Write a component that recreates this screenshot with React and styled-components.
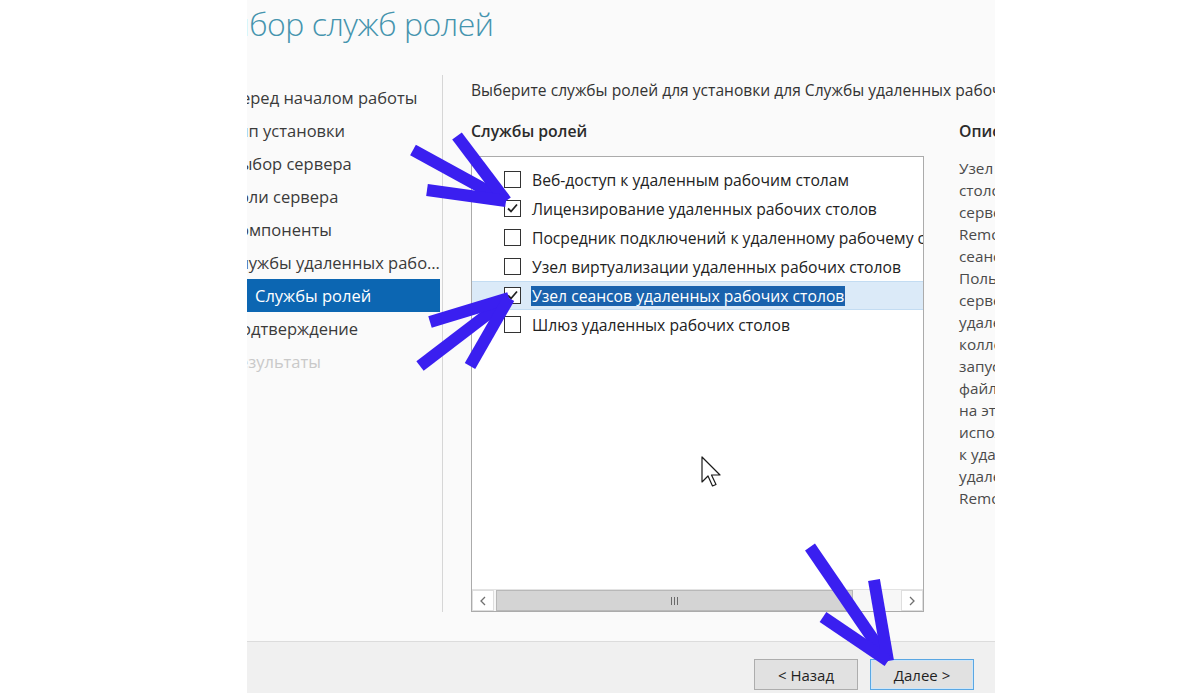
import React from 'react';
import styled, { createGlobalStyle } from 'styled-components';

const GlobalStyle = createGlobalStyle`
  html, body {
    margin: 0;
    padding: 0;
    background: #ffffff;
  }
  body {
    font-family: "Open Sans", "Noto Sans", "Liberation Sans", sans-serif;
  }
`;

const Page = styled.div`
  position: relative;
  display: flex;
  width: 1200px;
  height: 693px;
  overflow: hidden;
  background: #ffffff;
`;

const Gutter = styled.div`
  width: ${p => p.$w}px;
  flex-shrink: 0;
`;

const Viewport = styled.div`
  width: 748px;
  height: 693px;
  flex-shrink: 0;
  overflow: hidden;
  background: #fafafa;
`;

const Window = styled.div`
  margin-left: -40px;
  width: 788px;
  height: 100%;
  display: flex;
  flex-direction: column;
  overflow: hidden;
`;

const Header = styled.div`
  height: 75px;
  flex-shrink: 0;
`;

const Title = styled.h1`
  margin: 0;
  padding-top: 2px;
  font-size: 32px;
  line-height: 44px;
  font-weight: 300;
  letter-spacing: -0.5px;
  color: #4594ae;
  white-space: nowrap;
`;

const Body = styled.div`
  height: 537px;
  flex-shrink: 0;
  display: flex;
  margin-bottom: 29px;
`;

const Nav = styled.div`
  width: 236px;
  flex-shrink: 0;
  padding-top: 6px;
  border-right: 1px solid #d6d6d6;
  box-sizing: border-box;
`;

const NavItem = styled.div`
  height: 33px;
  margin-right: 2px;
  padding-left: ${p => (p.$sub ? 48 : 22)}px;
  display: flex;
  align-items: center;
  font-size: 16.5px;
  color: ${p => (p.$active ? '#ffffff' : p.$disabled ? '#c9c9c9' : '#3a3a3a')};
  background: ${p => (p.$active ? '#0c66b2' : 'transparent')};
  box-sizing: border-box;
`;

const NavText = styled.span`
  display: block;
  min-width: 0;
  white-space: nowrap;
  overflow: hidden;
  text-overflow: ellipsis;
`;

const Content = styled.div`
  flex: 1;
  min-width: 0;
  padding: 5px 0 0 28px;
  display: flex;
  flex-direction: column;
`;

const Instruction = styled.div`
  font-size: 15.6px;
  line-height: 20px;
  color: #333333;
  white-space: nowrap;
`;

const Columns = styled.div`
  flex: 1;
  display: flex;
  gap: 34px;
  margin-top: 21px;
  min-height: 0;
`;

const RolesColumn = styled.div`
  width: 453px;
  flex-shrink: 0;
  display: flex;
  flex-direction: column;
`;

const DescColumn = styled.div`
  width: 240px;
  flex-shrink: 0;
  padding-left: 1px;
`;

const Heading = styled.div`
  font-size: 15.8px;
  line-height: 20px;
  font-weight: 600;
  color: #2b2b2b;
  white-space: nowrap;
`;

const ListBox = styled.div`
  flex: 1;
  margin-top: 15px;
  background: #ffffff;
  border: 1px solid #ababab;
  display: flex;
  flex-direction: column;
  padding-top: 8px;
  overflow: hidden;
`;

const Rows = styled.div`
  flex: 1;
`;

const Row = styled.div`
  height: 29px;
  display: flex;
  align-items: center;
  padding-left: 32px;
  gap: 10px;
  box-sizing: border-box;
  overflow: hidden;
  background: ${p => (p.$selected ? '#dbeaf8' : 'transparent')};
  border-top: 1px solid ${p => (p.$selected ? '#c3dcf2' : 'transparent')};
  border-bottom: 1px solid ${p => (p.$selected ? '#c3dcf2' : 'transparent')};
`;

const Box = styled.span`
  width: 15px;
  height: 15px;
  flex-shrink: 0;
  border: 1px solid #333333;
  background: #ffffff;
  display: flex;
  align-items: center;
  justify-content: center;
`;

const RowLabel = styled.span`
  font-size: 15.7px;
  line-height: 20px;
  padding: 0 1px;
  color: ${p => (p.$selected ? '#ffffff' : '#222222')};
  background: ${p => (p.$selected ? '#1a62ad' : 'transparent')};
  white-space: nowrap;
`;

const ScrollBar = styled.div`
  height: 21px;
  display: flex;
  border-top: 1px solid #e3e3e3;
  background: #f7f7f7;
`;

const ScrollButton = styled.div`
  width: 22px;
  flex-shrink: 0;
  display: flex;
  align-items: center;
  justify-content: center;
  background: #ffffff;
  border: 1px solid #dedede;
  box-sizing: border-box;
`;

const Track = styled.div`
  flex: 1;
  display: flex;
  padding: 0 2px;
`;

const Thumb = styled.div`
  width: 357px;
  flex-shrink: 0;
  background: #d4d4d4;
  border: 1px solid #b8b8b8;
  box-sizing: border-box;
  display: flex;
  align-items: center;
  justify-content: center;
  gap: 2px;
`;

const GripLine = styled.span`
  width: 1px;
  height: 8px;
  background: #6a6a6a;
`;

const DescText = styled.div`
  margin-top: 16px;
  font-size: 15.3px;
  line-height: 22px;
  color: #4a4a4a;
  white-space: nowrap;
`;

const Footer = styled.div`
  flex: 1;
  border-top: 1px solid #dcdcdc;
  background: #f0f0f0;
  display: flex;
  justify-content: flex-end;
  align-items: flex-start;
  gap: 12px;
  padding: 17px 21px 0 0;
`;

const Button = styled.button`
  width: 104px;
  height: 31px;
  font-family: inherit;
  font-size: 15px;
  color: #1f1f1f;
  background: #e1e1e1;
  border: 1px solid ${p => (p.$focused ? '#5aa7e3' : '#adadad')};
  box-shadow: ${p => (p.$focused ? 'inset 0 0 0 1px #cfe6f8' : 'none')};
  padding: 0;
`;

const Overlay = styled.svg`
  position: absolute;
  left: 0;
  top: 0;
  pointer-events: none;
`;

const navItems = [
  { text: 'Перед началом работы' },
  { text: 'Тип установки' },
  { text: 'Выбор сервера' },
  { text: 'Роли сервера' },
  { text: 'Компоненты' },
  { text: 'Службы удаленных рабочих столов' },
  { text: 'Службы ролей', active: true, sub: true },
  { text: 'Подтверждение' },
  { text: 'Результаты', disabled: true },
];

const roles = [
  { text: 'Веб-доступ к удаленным рабочим столам' },
  { text: 'Лицензирование удаленных рабочих столов', checked: true },
  { text: 'Посредник подключений к удаленному рабочему столу' },
  { text: 'Узел виртуализации удаленных рабочих столов' },
  { text: 'Узел сеансов удаленных рабочих столов', checked: true, selected: true },
  { text: 'Шлюз удаленных рабочих столов' },
];

const description = [
  'Узел сеансов удаленных рабочих',
  'столов позволяет',
  'серверу размещать',
  'RemoteApp-программы или',
  'сеансовые рабочие столы.',
  'Пользователи могут подключаться к',
  'серверам узлов сеансов',
  'удаленных рабочих столов в',
  'коллекции сеансов для',
  'запуска программ, сохранения',
  'файлов и использования ресурсов',
  'на этих серверах. Доступ',
  'используется для подключения',
  'к удаленным рабочим столам',
  'удаленных рабочих столов или',
  'RemoteApp-программ.',
];

const arrows = [
  [[413, 150], [457, 136], [427, 190], [506, 201]],
  [[420, 366], [430, 322], [470, 366], [509, 298]],
  [[810, 547], [874, 580], [823, 617], [888, 661]],
];

function Check() {
  return (
    <svg width="13" height="13" viewBox="0 0 13 13">
      <polyline points="2,6.5 5,9.5 11,2.5" fill="none" stroke="#222" strokeWidth="1.8" />
    </svg>
  );
}

function Chevron({ dir }) {
  const pts = dir === 'left' ? '6,1 2,5 6,9' : '2,1 6,5 2,9';
  return (
    <svg width="8" height="10" viewBox="0 0 8 10">
      <polyline points={pts} fill="none" stroke="#707070" strokeWidth="1.3" />
    </svg>
  );
}

export default function App() {
  return (
    <>
      <GlobalStyle />
      <Page>
        <Gutter $w={247} />
        <Viewport>
          <Window>
            <Header>
              <Title>Выбор служб ролей</Title>
            </Header>
            <Body>
              <Nav>
                {navItems.map(item => (
                  <NavItem key={item.text} $active={item.active} $sub={item.sub} $disabled={item.disabled}>
                    <NavText>{item.text}</NavText>
                  </NavItem>
                ))}
              </Nav>
              <Content>
                <Instruction>
                  Выберите службы ролей для установки для Службы удаленных рабочих столов
                </Instruction>
                <Columns>
                  <RolesColumn>
                    <Heading>Службы ролей</Heading>
                    <ListBox>
                      <Rows>
                        {roles.map(r => (
                          <Row key={r.text} $selected={r.selected}>
                            <Box>{r.checked && <Check />}</Box>
                            <RowLabel $selected={r.selected}>{r.text}</RowLabel>
                          </Row>
                        ))}
                      </Rows>
                      <ScrollBar>
                        <ScrollButton><Chevron dir="left" /></ScrollButton>
                        <Track>
                          <Thumb>
                            <GripLine />
                            <GripLine />
                            <GripLine />
                          </Thumb>
                        </Track>
                        <ScrollButton><Chevron dir="right" /></ScrollButton>
                      </ScrollBar>
                    </ListBox>
                  </RolesColumn>
                  <DescColumn>
                    <Heading>Описание</Heading>
                    <DescText>
                      {description.map(line => (
                        <div key={line}>{line}</div>
                      ))}
                    </DescText>
                  </DescColumn>
                </Columns>
              </Content>
            </Body>
            <Footer>
              <Button>&lt; Назад</Button>
              <Button $focused>Далее &gt;</Button>
            </Footer>
          </Window>
        </Viewport>
        <Overlay width="1200" height="693" viewBox="0 0 1200 693">
          {arrows.map((a, i) => (
            <g key={i} stroke="#3a1ff0" strokeWidth="12" strokeLinecap="butt">
              {a.slice(0, 3).map(([x, y], j) => (
                <line key={j} x1={x} y1={y} x2={a[3][0]} y2={a[3][1]} />
              ))}
            </g>
          ))}
          <path
            d="M702 457 L702 482 L708 476 L712.5 486 L716 484.5 L711.5 475 L720 475 Z"
            fill="#ffffff"
            stroke="#1a1a1a"
            strokeWidth="1.2"
            strokeLinejoin="round"
          />
        </Overlay>
      </Page>
    </>
  );
}
